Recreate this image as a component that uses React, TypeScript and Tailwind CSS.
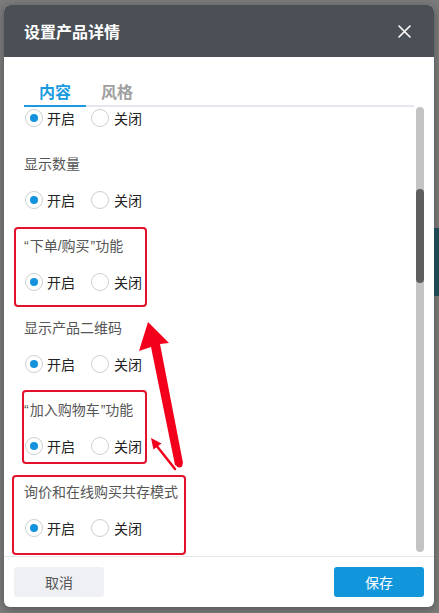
import React from "react"

// Simple radio pair used by every setting row
function RadioRow({ on = true }: { on?: boolean }) {
  return (
    <div className="flex items-center h-5 text-[14px] text-[#222]">
      <span className="w-[18px] h-[18px] rounded-full border border-[#cfcfcf] bg-white flex items-center justify-center ml-px">
        {on && <span className="w-[8px] h-[8px] rounded-full bg-[#1592dc]" />}
      </span>
      <span className="ml-[4px] leading-5">开启</span>
      <span className="w-[18px] h-[18px] rounded-full border border-[#cfcfcf] bg-white ml-[16px] flex items-center justify-center">
        {!on && <span className="w-[8px] h-[8px] rounded-full bg-[#1592dc]" />}
      </span>
      <span className="ml-[5px] leading-5">关闭</span>
    </div>
  )
}

// quotes and slash use the narrow latin glyphs, like the original
const L = ({ c, cls = "" }: { c: string; cls?: string }) => (
  <span className={cls} style={{ fontFamily: '"Liberation Sans", sans-serif' }}>
    {c}
  </span>
)

const settings: { key: string; label: React.ReactNode }[] = [
  { key: "qty", label: "显示数量" },
  {
    key: "buy",
    label: (
      <>
        <L c="“" cls="mr-[1px]" />下单<L c="/" />购买<L c="”" cls="ml-[1px]" />功能
      </>
    ),
  },
  { key: "qr", label: "显示产品二维码" },
  {
    key: "cart",
    label: (
      <>
        <L c="“" cls="mr-[1px]" />加入购物车<L c="”" cls="ml-[1px]" />功能
      </>
    ),
  },
  { key: "mode", label: "询价和在线购买共存模式" },
]

export default function App() {
  return (
    <div
      className="relative w-[439px] h-[613px] overflow-hidden bg-[#7c7c7c] pl-[4px] pt-[5px]"
      style={{ fontFamily: '"Noto Sans CJK SC", "Noto Sans", sans-serif' }}
    >
      {/* page peeking out behind the overlay */}
      <div className="absolute right-0 top-[228px] w-[5px] h-[68px] bg-[#1f4a55]" />

      <div className="w-[430px] h-[602px] rounded-[6px] bg-white overflow-hidden flex flex-col shadow-[0_2px_10px_rgba(0,0,0,0.35)]">
        {/* header */}
        <div className="h-[52px] bg-[#4b4f56] flex items-center justify-between pl-5 pr-[23px]">
          <span className="text-white text-[16px] font-bold">设置产品详情</span>
          <svg width="13" height="13" viewBox="0 0 13 13" className="mt-px">
            <path d="M1 1 L12 12 M12 1 L1 12" stroke="#fff" strokeWidth="1.6" strokeLinecap="round" />
          </svg>
        </div>

        {/* body */}
        <div className="flex-1 flex flex-col pt-[22px] pl-5 pr-[10px] min-h-0">
          <div className="flex border-b-2 border-[#e4e7ed] mr-[10px]">
            <div className="w-[62px] text-center text-[16px] font-bold leading-6 text-[#1a9be0] pb-[2px] border-b-2 border-[#1a9be0] -mb-[2px]">
              内容
            </div>
            <div className="w-[62px] text-center text-[16px] font-bold leading-6 text-[#a0a0a0] pb-[2px] border-b-2 border-transparent -mb-[2px]">
              风格
            </div>
          </div>

          <div className="flex flex-1 min-h-0">
            <div className="flex-1 overflow-hidden pt-px">
              <RadioRow />
              {settings.map((s) => (
                <div key={s.key} className="mt-[25px]">
                  <div className="h-5 leading-5 text-[14px] text-[#555]">{s.label}</div>
                  <div className="mt-[17px]">
                    <RadioRow />
                  </div>
                </div>
              ))}
            </div>
            {/* scrollbar */}
            <div className="w-2 h-[445px] rounded-full bg-[#c3c3c3] ml-[2px] pt-[82px]">
              <div className="w-2 h-[94px] rounded-full bg-[#5e5e5e]" />
            </div>
          </div>
        </div>

        {/* footer */}
        <div className="border-t border-[#e6e6e6] px-[10px] py-[10px] flex justify-between">
          <button className="w-[90px] h-[30px] rounded-[3px] bg-[#eef0f3] text-[14px] text-[#555]">取消</button>
          <button className="w-[90px] h-[30px] rounded-[3px] bg-[#1296db] text-[14px] text-white">保存</button>
        </div>
      </div>

      {/* red annotation boxes */}
      <div className="absolute left-[14px] top-[227px] w-[133px] h-[80px] border-[2.5px] border-[#e3112c] rounded-[4px]" />
      <div className="absolute left-[22px] top-[390px] w-[125px] h-[74px] border-[2.5px] border-[#e3112c] rounded-[4px]" />
      <div className="absolute left-[12px] top-[475px] w-[174px] h-[80px] border-[2.5px] border-[#e3112c] rounded-[4px]" />

      {/* red arrows */}
      <svg className="absolute inset-0 pointer-events-none" width="439" height="613">
        <polygon
          points="148,322 169,343 160,344 183,463 179,467 175,465 151,347 139,351"
          fill="#f2001c"
        />
        <circle cx="179.5" cy="464.5" r="3" fill="#f2001c" />
        <line x1="175" y1="469" x2="156" y2="445" stroke="#f2001c" strokeWidth="2.5" strokeLinecap="round" />
        <polygon points="151,438 161.5,443.5 153.5,449.5" fill="#f2001c" />
      </svg>
    </div>
  )
}
